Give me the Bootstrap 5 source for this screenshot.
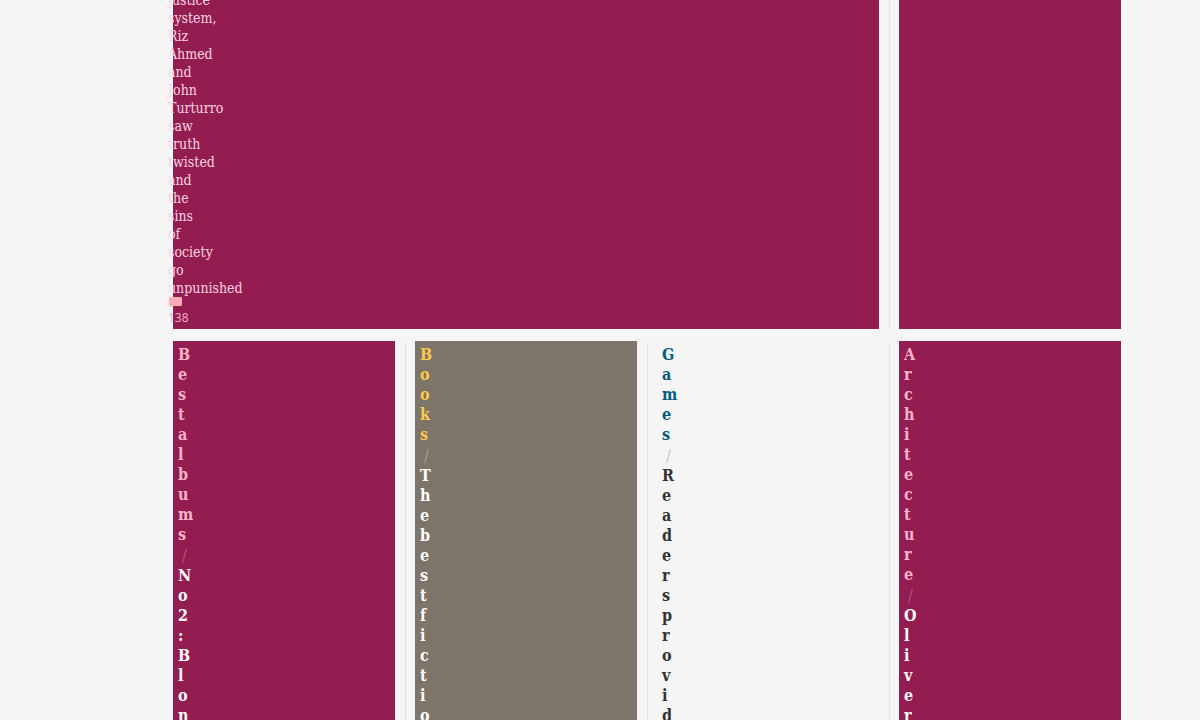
<!DOCTYPE html>
<html lang="en">
<head>
<meta charset="utf-8">
<meta name="viewport" content="width=device-width, initial-scale=1">
<title>Culture</title>
<link href="https://cdn.jsdelivr.net/npm/bootstrap@5.3.0/dist/css/bootstrap.min.css" rel="stylesheet">
<style>
  body { background: #f5f5f5; font-family: "DejaVu Serif Condensed", "DejaVu Serif", serif; }
  .front { padding: 0 79px 0 173px; margin-top: -9px; }
  .slice { --bs-gutter-x: 20px; }
  .slice > .ruled { padding-left: 9px; border-left: 1px solid #e2e2e2; }
  .lower { margin-top: 12px; }
  .lower > div { position: relative; }
  .lower > .ruled { border-left-color: transparent; }
  .lower > .ruled::before { content: ""; position: absolute; left: -1px; top: 3px; bottom: 0; width: 1px; background: #e2e2e2; }
  .tile-media { background: #931c50; }
  .tile-feature { background: #7d7569; }
  .standfirst { width: 1px; margin: 0 0 0 -5px; font-size: 14px; line-height: 18px; color: #fbd3e0; }
  .replies { margin-left: -5px; color: #f5a9c2; font-family: "Noto Sans", sans-serif; font-size: 12px; line-height: 18px; padding-bottom: 2px; }
  .replies svg { margin: 0 0 2px 1px; }
  .headline { width: 1px; box-sizing: content-box; margin: 0; padding: 4px 0 0 5px; font-size: 16px; line-height: 20px; font-weight: 700; line-break: anywhere; }
  .headline a { color: #fff; text-decoration: none; }
  .headline .kicker { display: block; color: #ffb3c9; margin-bottom: 1px; }
  .headline .divider { display: block; margin: 0 0 0 4px; font-weight: 400; color: #b0567e; }
  .tile-feature .headline .kicker { color: #fdc94a; }
  .tile-feature .headline .divider { color: #a69f94; }
  .tile-plain .headline a { color: #333; }
  .tile-plain .headline .kicker { color: #005a80; }
  .tile-plain .headline .divider { color: #c8c8c8; }
</style>
</head>
<body class="overflow-hidden">
<main class="front">
  <section class="row slice">
    <div class="col-9">
      <article class="tile-media h-100">
        <p class="standfirst">justice system, Riz Ahmed and John Turturro saw truth twisted and the sins of society go unpunished</p>
        <div class="replies d-flex flex-column align-items-start">
          <svg width="13" height="10" viewBox="0 0 13 10" aria-hidden="true"><path d="M1 0h11l1 1v7l-1 1H4L1 10 0 8V1z" fill="#ffadba"/></svg>
          <span>138</span>
        </div>
      </article>
    </div>
    <div class="col-3 ruled"><article class="tile-media h-100"></article></div>
  </section>
  <section class="row slice lower">
    <div class="col-3">
      <article class="tile-media h-100">
        <h2 class="headline"><a href="#"><span class="kicker">Best albums</span><span class="divider">/</span>No 2: Blon</a></h2>
      </article>
    </div>
    <div class="col-3 ruled">
      <article class="tile-feature h-100">
        <h2 class="headline"><a href="#"><span class="kicker">Books</span><span class="divider">/</span>The best fictio</a></h2>
      </article>
    </div>
    <div class="col-3 ruled">
      <article class="tile-plain h-100">
        <h2 class="headline"><a href="#"><span class="kicker">Games</span><span class="divider">/</span>Readers provid</a></h2>
      </article>
    </div>
    <div class="col-3 ruled">
      <article class="tile-media h-100">
        <h2 class="headline"><a href="#"><span class="kicker">Architecture</span><span class="divider">/</span>Oliver</a></h2>
      </article>
    </div>
  </section>
</main>
<script src="https://cdn.jsdelivr.net/npm/bootstrap@5.3.0/dist/js/bootstrap.bundle.min.js"></script>
</body>
</html>
